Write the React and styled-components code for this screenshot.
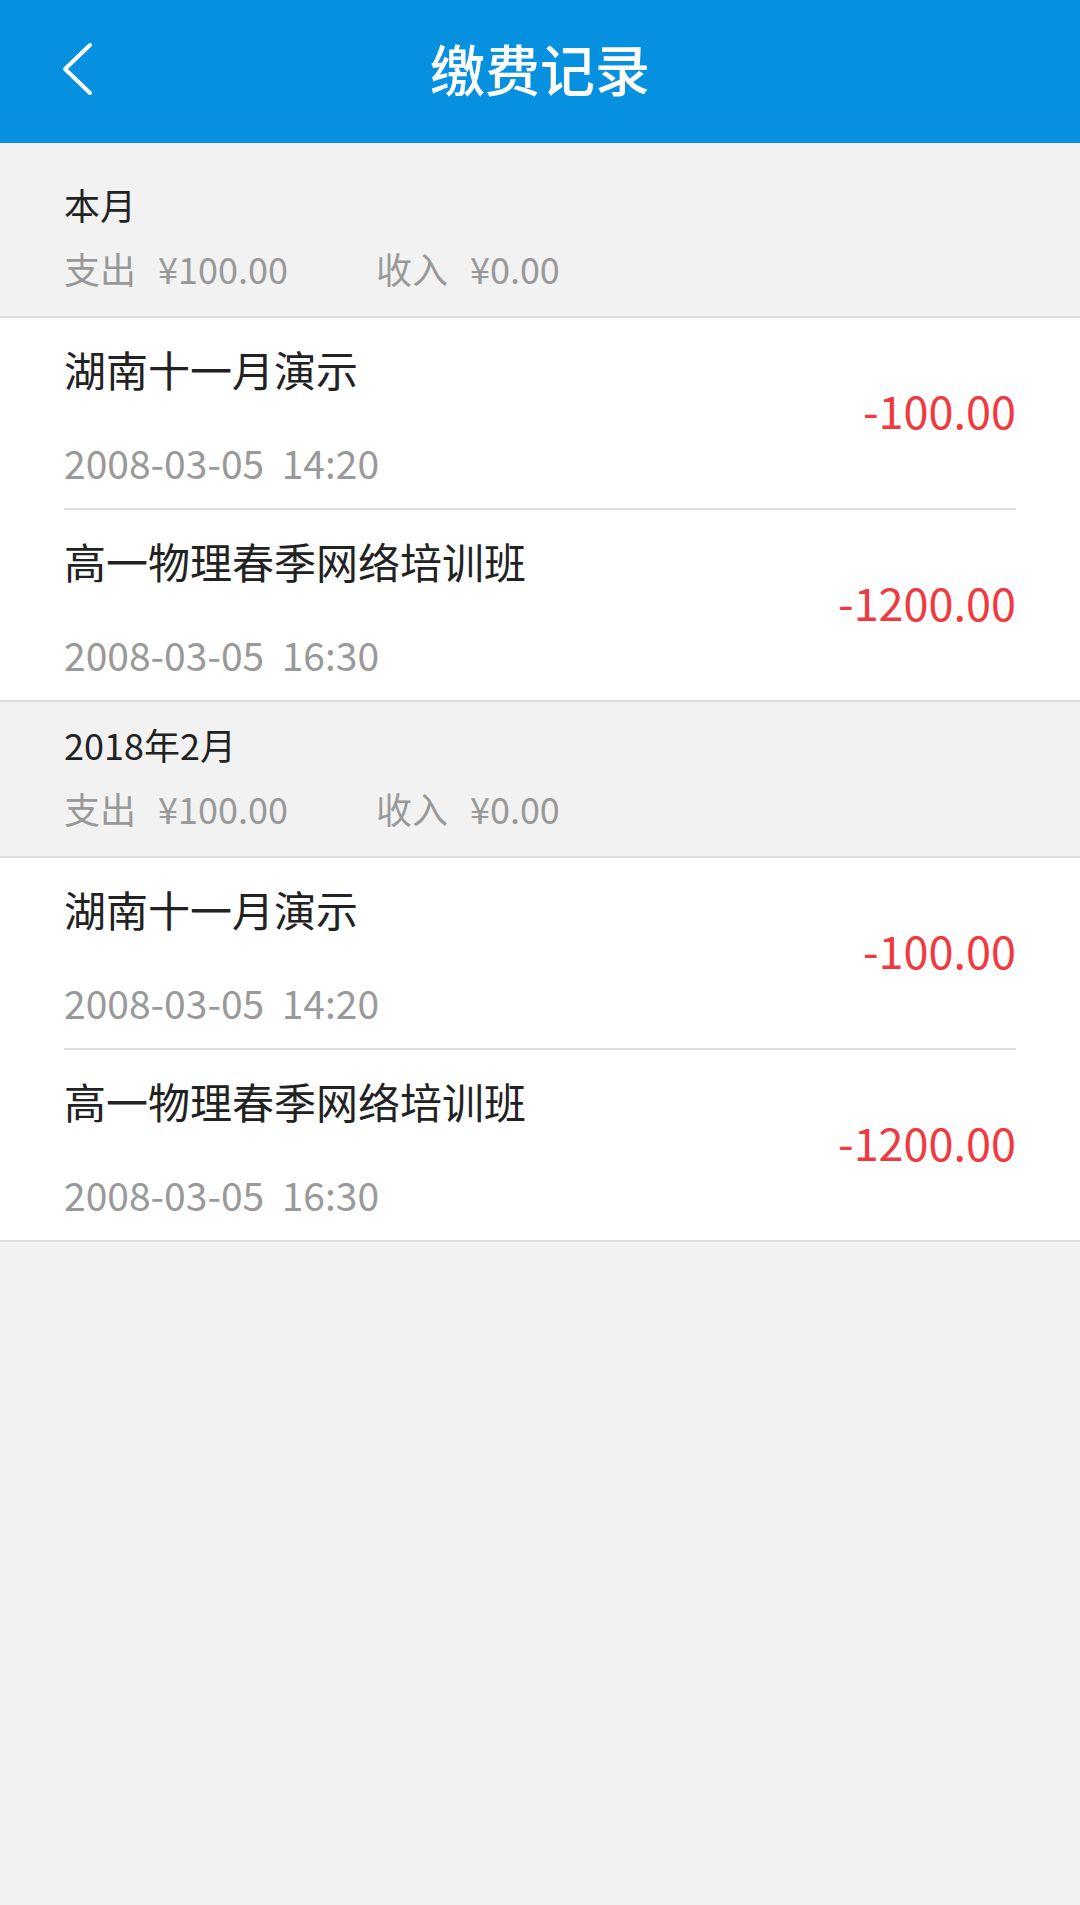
import React from 'react'
import styled, { createGlobalStyle } from 'styled-components'

const Global = createGlobalStyle`
  html, body {
    margin: 0;
    padding: 0;
    background: #f2f2f2;
    font-family: "Noto Sans CJK SC", "Noto Sans", sans-serif;
  }
`

const Page = styled.div`
  width: 1080px;
  min-height: 1905px;
  background: #f2f2f2;
`

const Header = styled.header`
  height: 143px;
  background: #0590e0;
  display: grid;
  grid-template-columns: 160px 1fr 160px;
  align-items: center;
  color: #fff;
`

const Back = styled.button`
  border: 0;
  background: none;
  padding: 0 0 6px 60px;
  height: 100%;
  display: flex;
  align-items: center;
  cursor: pointer;
`

const Title = styled.h1`
  margin: 0 0 8px;
  text-align: center;
  font-size: 55px;
  font-weight: 500;
  line-height: 1;
`

const List = styled.div`
  padding-top: ${p => (p.first ? '18px' : '0')};
`

const GroupHead = styled.div`
  padding: ${p => (p.first ? '21px' : '20px')} 64px 26px;
  border-bottom: 2px solid #dcdcdc;
`

const GroupName = styled.div`
  font-size: 36px;
  line-height: 44px;
  color: #222;
`

const Summary = styled.div`
  display: flex;
  margin-top: 20px;
  font-size: 36px;
  line-height: 44px;
  color: #999;
`

const Stat = styled.span`
  display: flex;
  gap: 22px;
  & + & {
    margin-left: 88px;
  }
`

const Records = styled.div`
  background: #fff;
  border-bottom: 2px solid #dcdcdc;
`

const Row = styled.div`
  margin: 0 64px;
  display: flex;
  align-items: center;
  justify-content: space-between;
  height: 190px;
  & + & {
    border-top: 2px solid #dcdcdc;
  }
`

const Info = styled.div`
  display: flex;
  flex-direction: column;
  justify-content: space-between;
  height: 100%;
  padding: 25px 0 22px;
  box-sizing: border-box;
`

const Name = styled.div`
  font-size: 42px;
  line-height: 52px;
  color: #222;
`

const Time = styled.div`
  font-size: 39px;
  line-height: 48px;
  color: #999;
  white-space: pre;
`

const Amount = styled.div`
  font-size: 45px;
  color: #ef3a3f;
  margin-bottom: 8px;
`

const groups = [
  {
    name: '本月',
    out: '¥100.00',
    income: '¥0.00',
    items: [
      { id: 1, title: '湖南十一月演示', time: '2008-03-05  14:20', amount: '-100.00' },
      { id: 2, title: '高一物理春季网络培训班', time: '2008-03-05  16:30', amount: '-1200.00' },
    ],
  },
  {
    name: '2018年2月',
    out: '¥100.00',
    income: '¥0.00',
    items: [
      { id: 3, title: '湖南十一月演示', time: '2008-03-05  14:20', amount: '-100.00' },
      { id: 4, title: '高一物理春季网络培训班', time: '2008-03-05  16:30', amount: '-1200.00' },
    ],
  },
]

function App() {
  return (
    <>
      <Global />
      <Page>
        <Header>
          <Back aria-label="返回">
            <svg width="34" height="54" viewBox="0 0 34 54">
              <polyline points="30,3 5,27 30,51" fill="none" stroke="#fff" strokeWidth="4" strokeLinecap="round" strokeLinejoin="round" />
            </svg>
          </Back>
          <Title>缴费记录</Title>
          <div />
        </Header>
        {groups.map((g, i) => (
          <List key={g.name} first={i === 0}>
            <GroupHead first={i === 0}>
              <GroupName>{g.name}</GroupName>
              <Summary>
                <Stat><span>支出</span><span>{g.out}</span></Stat>
                <Stat><span>收入</span><span>{g.income}</span></Stat>
              </Summary>
            </GroupHead>
            <Records>
              {g.items.map(e => (
                <Row key={e.id}>
                  <Info>
                    <Name>{e.title}</Name>
                    <Time>{e.time}</Time>
                  </Info>
                  <Amount>{e.amount}</Amount>
                </Row>
              ))}
            </Records>
          </List>
        ))}
      </Page>
    </>
  )
}

export default App
